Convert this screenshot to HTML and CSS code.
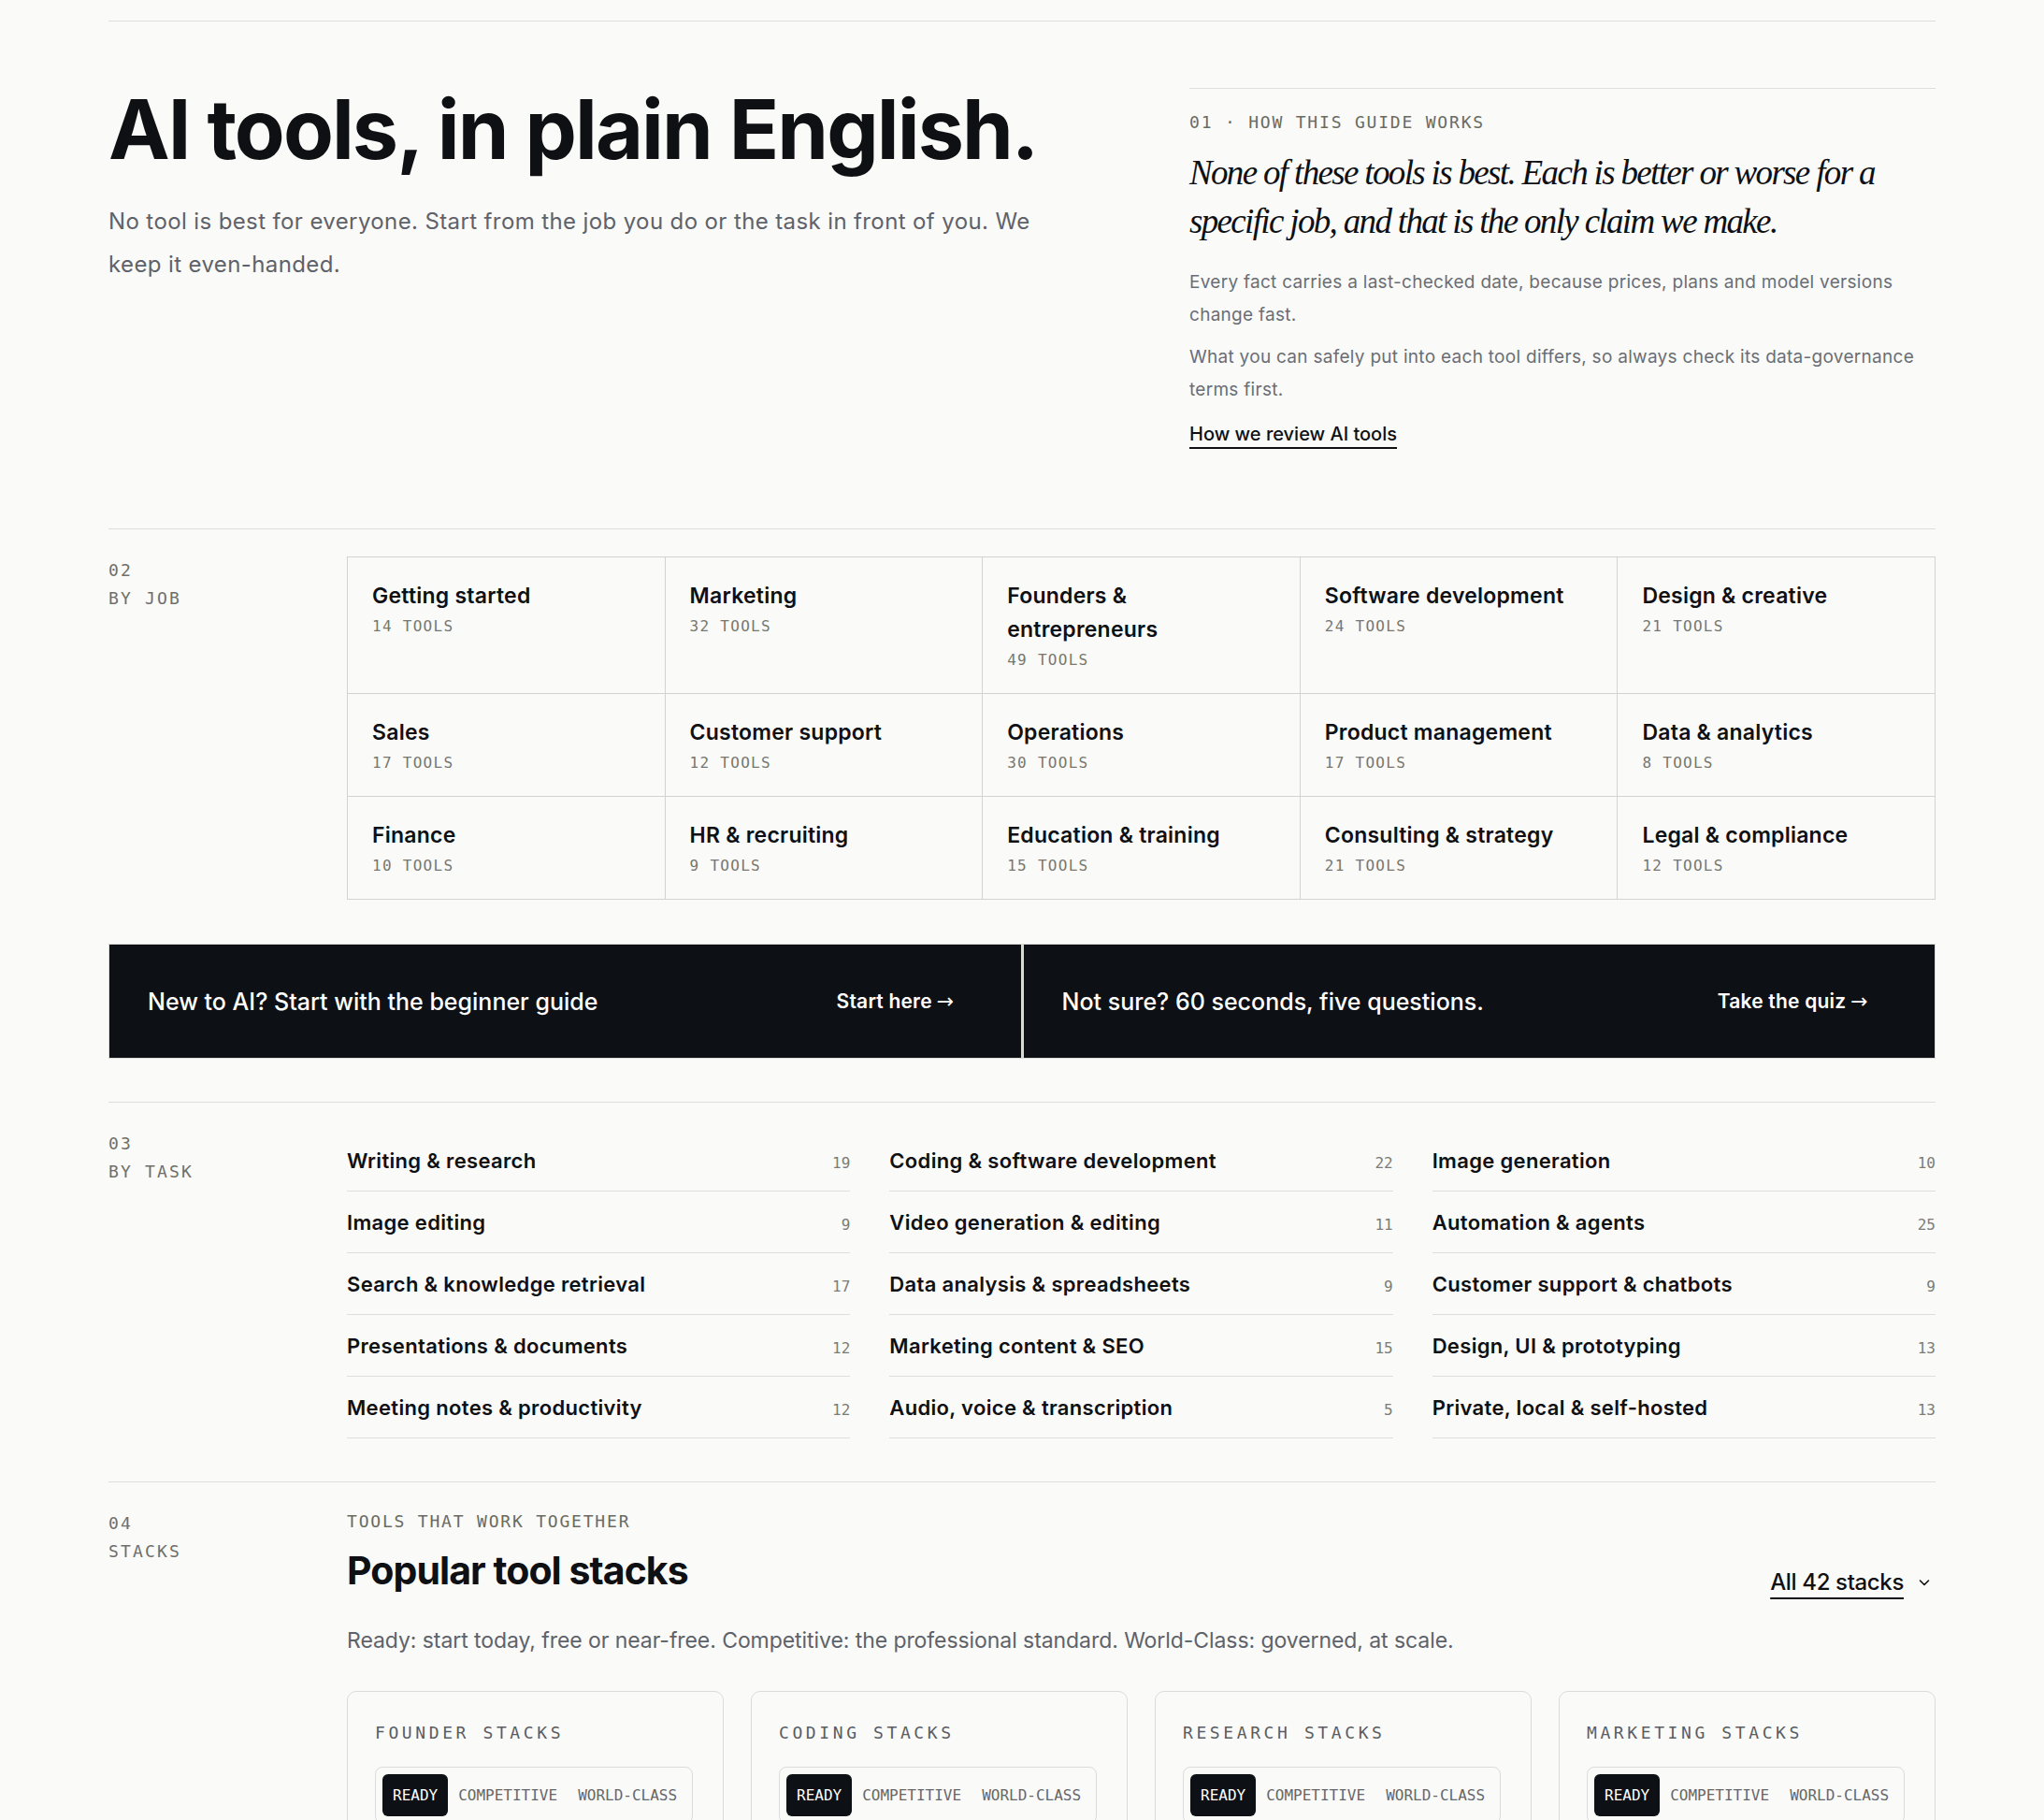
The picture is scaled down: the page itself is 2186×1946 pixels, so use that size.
FILE: index.html
```html
<!DOCTYPE html>
<html lang="en">
<head>
<meta charset="utf-8">
<title>AI tools, in plain English</title>
<link rel="stylesheet" href="styles.css">
</head>
<body>
<div class="page">
  <div class="topbar"></div>

  <section class="hero">
    <div class="hero-main">
      <h1 class="hero-title">AI tools, in plain English.</h1>
      <p class="hero-lede">No tool is best for everyone. Start from the job you do or the task in front of you. We keep it even-handed.</p>
    </div>
    <aside class="guide">
      <p class="eyebrow">01 · How this guide works</p>
      <p class="pull">None of these tools is best. Each is better or worse for a<br>specific job, and that is the only claim we make.</p>
      <p class="note">Every fact carries a last-checked date, because prices, plans and model versions change fast.</p>
      <p class="note">What you can safely put into each tool differs, so always check its data-governance terms first.</p>
      <a class="text-link" href="#">How we review AI tools</a>
    </aside>
  </section>

  <section class="block">
    <div class="block-label"><span>02</span><span>By job</span></div>
    <div class="job-grid">
      <a class="job" href="#"><span class="job-name">Getting started</span><span class="job-count">14 tools</span></a>
      <a class="job" href="#"><span class="job-name">Marketing</span><span class="job-count">32 tools</span></a>
      <a class="job" href="#"><span class="job-name">Founders &amp;<br>entrepreneurs</span><span class="job-count">49 tools</span></a>
      <a class="job" href="#"><span class="job-name">Software development</span><span class="job-count">24 tools</span></a>
      <a class="job" href="#"><span class="job-name">Design &amp; creative</span><span class="job-count">21 tools</span></a>
      <a class="job" href="#"><span class="job-name">Sales</span><span class="job-count">17 tools</span></a>
      <a class="job" href="#"><span class="job-name">Customer support</span><span class="job-count">12 tools</span></a>
      <a class="job" href="#"><span class="job-name">Operations</span><span class="job-count">30 tools</span></a>
      <a class="job" href="#"><span class="job-name">Product management</span><span class="job-count">17 tools</span></a>
      <a class="job" href="#"><span class="job-name">Data &amp; analytics</span><span class="job-count">8 tools</span></a>
      <a class="job" href="#"><span class="job-name">Finance</span><span class="job-count">10 tools</span></a>
      <a class="job" href="#"><span class="job-name">HR &amp; recruiting</span><span class="job-count">9 tools</span></a>
      <a class="job" href="#"><span class="job-name">Education &amp; training</span><span class="job-count">15 tools</span></a>
      <a class="job" href="#"><span class="job-name">Consulting &amp; strategy</span><span class="job-count">21 tools</span></a>
      <a class="job" href="#"><span class="job-name">Legal &amp; compliance</span><span class="job-count">12 tools</span></a>
    </div>
  </section>

  <div class="cta-row">
    <a class="cta" href="#"><span class="cta-text">New to AI? Start with the beginner guide</span><span class="cta-action">Start here<span class="arrow">→</span></span></a>
    <a class="cta" href="#"><span class="cta-text">Not sure? 60 seconds, five questions.</span><span class="cta-action">Take the quiz<span class="arrow">→</span></span></a>
  </div>

  <section class="block ruled">
    <div class="block-label"><span>03</span><span>By task</span></div>
    <div class="task-cols">
      <ul class="task-list">
        <li class="task"><span class="task-name">Writing &amp; research</span><span class="task-count">19</span></li>
        <li class="task"><span class="task-name">Image editing</span><span class="task-count">9</span></li>
        <li class="task"><span class="task-name">Search &amp; knowledge retrieval</span><span class="task-count">17</span></li>
        <li class="task"><span class="task-name">Presentations &amp; documents</span><span class="task-count">12</span></li>
        <li class="task"><span class="task-name">Meeting notes &amp; productivity</span><span class="task-count">12</span></li>
      </ul>
      <ul class="task-list">
        <li class="task"><span class="task-name">Coding &amp; software development</span><span class="task-count">22</span></li>
        <li class="task"><span class="task-name">Video generation &amp; editing</span><span class="task-count">11</span></li>
        <li class="task"><span class="task-name">Data analysis &amp; spreadsheets</span><span class="task-count">9</span></li>
        <li class="task"><span class="task-name">Marketing content &amp; SEO</span><span class="task-count">15</span></li>
        <li class="task"><span class="task-name">Audio, voice &amp; transcription</span><span class="task-count">5</span></li>
      </ul>
      <ul class="task-list">
        <li class="task"><span class="task-name">Image generation</span><span class="task-count">10</span></li>
        <li class="task"><span class="task-name">Automation &amp; agents</span><span class="task-count">25</span></li>
        <li class="task"><span class="task-name">Customer support &amp; chatbots</span><span class="task-count">9</span></li>
        <li class="task"><span class="task-name">Design, UI &amp; prototyping</span><span class="task-count">13</span></li>
        <li class="task"><span class="task-name">Private, local &amp; self-hosted</span><span class="task-count">13</span></li>
      </ul>
    </div>
  </section>

  <section class="block ruled">
    <div class="block-label"><span>04</span><span>Stacks</span></div>
    <div class="stacks">
      <div class="stacks-head">
        <div>
          <p class="eyebrow">Tools that work together</p>
          <h2 class="stacks-title">Popular tool stacks</h2>
        </div>
        <a class="all-link" href="#"><span>All 42 stacks</span>
          <svg class="chev" viewBox="0 0 16 16" width="16" height="16" aria-hidden="true"><path d="M3.5 6 L8 10.5 L12.5 6" fill="none" stroke="currentColor" stroke-width="1.6" stroke-linecap="round" stroke-linejoin="round"/></svg>
        </a>
      </div>
      <p class="stacks-desc">Ready: start today, free or near-free. Competitive: the professional standard. World-Class: governed, at scale.</p>
      <div class="stack-cards">
        <div class="stack-card">
          <p class="stack-kind">Founder stacks</p>
          <div class="tier-switch"><span class="tier on">Ready</span><span class="tier">Competitive</span><span class="tier">World-Class</span></div>
        </div>
        <div class="stack-card">
          <p class="stack-kind">Coding stacks</p>
          <div class="tier-switch"><span class="tier on">Ready</span><span class="tier">Competitive</span><span class="tier">World-Class</span></div>
        </div>
        <div class="stack-card">
          <p class="stack-kind">Research stacks</p>
          <div class="tier-switch"><span class="tier on">Ready</span><span class="tier">Competitive</span><span class="tier">World-Class</span></div>
        </div>
        <div class="stack-card">
          <p class="stack-kind">Marketing stacks</p>
          <div class="tier-switch"><span class="tier on">Ready</span><span class="tier">Competitive</span><span class="tier">World-Class</span></div>
        </div>
      </div>
    </div>
  </section>
</div>
</body>
</html>
```

FILE: styles.css
```css
:root {
  --bg: #fafaf8;
  --ink: #0e1013;
  --muted: #5e626a;
  --soft: #6a6e75;
  --mono-ink: #6b6a5f;
  --rule: #dfdeda;
  --cell: #d4d3cf;
  --sans: "Inter", "Liberation Sans", sans-serif;
  --mono: "DejaVu Sans Mono", "Liberation Mono", monospace;
  --serif: "Liberation Serif", serif;
}

* { box-sizing: border-box; }

html, body {
  margin: 0;
  background: var(--bg);
  color: var(--ink);
  font-family: var(--sans);
}

a { color: inherit; text-decoration: none; }
p { margin: 0; }
ul { list-style: none; margin: 0; padding: 0; }

.page {
  max-width: 1954px;
  margin: 0 auto;
}

.topbar {
  height: 23px;
  border-bottom: 1px solid var(--rule);
}

/* hero */
.hero {
  display: grid;
  grid-template-columns: 1fr 798px;
  column-gap: 158px;
  padding: 71px 0 86px;
  border-bottom: 1px solid var(--rule);
}

.hero-title {
  margin: 0;
  font-size: 88px;
  line-height: 1;
  font-weight: 700;
  letter-spacing: -0.022em;
}

.hero-lede {
  margin-top: 32px;
  font-size: 24px;
  line-height: 46px;
  color: var(--muted);
  letter-spacing: 0.016em;
}

.guide {
  border-top: 1px solid var(--rule);
  padding-top: 23px;
}

.eyebrow {
  font-family: var(--mono);
  font-size: 18px;
  line-height: 26px;
  letter-spacing: 0.1em;
  text-transform: uppercase;
  color: var(--mono-ink);
}

.pull {
  margin-top: 15px;
  font-family: var(--serif);
  font-style: italic;
  font-size: 37px;
  line-height: 52px;
  letter-spacing: -0.045em;
  color: var(--ink);
}

.note {
  margin-top: 10px;
  font-size: 19px;
  line-height: 35px;
  color: var(--soft);
  letter-spacing: 0.015em;
}

.pull + .note { margin-top: 21px; }

.text-link {
  display: inline-block;
  margin-top: 15px;
  font-size: 20px;
  line-height: 30px;
  font-weight: 500;
  letter-spacing: 0;
  text-decoration: underline;
  text-decoration-thickness: 2px;
  text-underline-offset: 7px;
}

/* numbered blocks */
.block {
  display: grid;
  grid-template-columns: 215px 1fr;
  column-gap: 40px;
  padding-top: 29px;
}

.block.ruled {
  border-top: 1px solid var(--rule);
  margin-top: 46px;
}

.block-label {
  display: flex;
  flex-direction: column;
  font-family: var(--mono);
  font-size: 18px;
  line-height: 30px;
  letter-spacing: 0.12em;
  text-transform: uppercase;
  color: #6f6f6a;
}

/* jobs */
.job-grid {
  display: grid;
  grid-template-columns: repeat(5, 1fr);
  border-top: 1px solid var(--cell);
  border-left: 1px solid var(--cell);
}

.job {
  display: flex;
  flex-direction: column;
  padding: 23px 26px 23px;
  border-right: 1px solid var(--cell);
  border-bottom: 1px solid var(--cell);
}

.job-name {
  font-size: 23px;
  line-height: 36px;
  font-weight: 600;
  letter-spacing: 0.01em;
}

.job-count {
  margin-top: 3px;
  font-family: var(--mono);
  font-size: 16px;
  line-height: 24px;
  letter-spacing: 0.08em;
  text-transform: uppercase;
  color: #77776f;
}

/* calls to action */
.cta-row {
  display: grid;
  grid-template-columns: 1fr 1fr;
  gap: 3px;
  margin-top: 47px;
  background: #d9d9d6;
  border: 1px solid #d9d9d6;
}

.cta {
  display: flex;
  align-items: center;
  justify-content: space-between;
  height: 121px;
  padding: 0 71px 0 41px;
  background: #0d1014;
  color: #fff;
}

.cta-text {
  font-size: 25px;
  font-weight: 500;
  letter-spacing: 0;
}

.cta-action {
  display: flex;
  align-items: center;
  gap: 5px;
  font-size: 21px;
  font-weight: 600;
  letter-spacing: 0.01em;
}

.arrow {
  font-family: "DejaVu Sans", "Liberation Sans", sans-serif;
  font-weight: 400;
  font-size: 22px;
  line-height: 1;
}

/* tasks */
.task-cols {
  display: grid;
  grid-template-columns: repeat(3, 1fr);
  column-gap: 42px;
}

.task {
  display: flex;
  justify-content: space-between;
  align-items: baseline;
  padding: 18px 0 17px;
  border-bottom: 1px solid var(--rule);
}

.task-name {
  font-size: 22px;
  line-height: 30px;
  font-weight: 600;
  letter-spacing: 0.015em;
}

.task-count {
  font-family: var(--mono);
  font-size: 16px;
  color: #7c7c76;
}

/* stacks */
.stacks-head {
  display: flex;
  justify-content: space-between;
  align-items: flex-end;
}

.stacks-title {
  margin: 14px 0 0;
  font-size: 41px;
  line-height: 50px;
  font-weight: 700;
  letter-spacing: -0.023em;
}

.all-link {
  display: flex;
  align-items: center;
  gap: 14px;
  margin-bottom: -5px;
  font-size: 24px;
  line-height: 34px;
  font-weight: 500;
  letter-spacing: -0.015em;
}

.all-link span {
  text-decoration: underline;
  text-decoration-thickness: 2px;
  text-underline-offset: 8px;
}

.chev { color: var(--ink); margin-right: 4px; }

.stacks-desc {
  margin-top: 32px;
  font-size: 23px;
  line-height: 36px;
  color: var(--muted);
  letter-spacing: -0.003em;
}

.stack-cards {
  display: grid;
  grid-template-columns: repeat(4, 1fr);
  column-gap: 29px;
  margin-top: 36px;
}

.stack-card {
  border: 1px solid #dcdbd7;
  border-radius: 10px;
  padding: 31px 29px 30px;
  height: 200px;
}

.stack-kind {
  font-family: var(--mono);
  font-size: 18px;
  line-height: 26px;
  letter-spacing: 0.2em;
  text-transform: uppercase;
  color: #5b5d62;
}

.tier-switch {
  display: inline-flex;
  margin-top: 23px;
  padding: 7px 5px 7px 7px;
  border: 1px solid #dcdbd7;
  border-radius: 8px;
}

.tier {
  padding: 0 11px;
  height: 45px;
  display: flex;
  align-items: center;
  font-family: var(--mono);
  font-size: 16px;
  text-transform: uppercase;
  color: #66676b;
  border-radius: 6px;
}

.tier.on {
  background: #0d1014;
  color: #fff;
}
```
